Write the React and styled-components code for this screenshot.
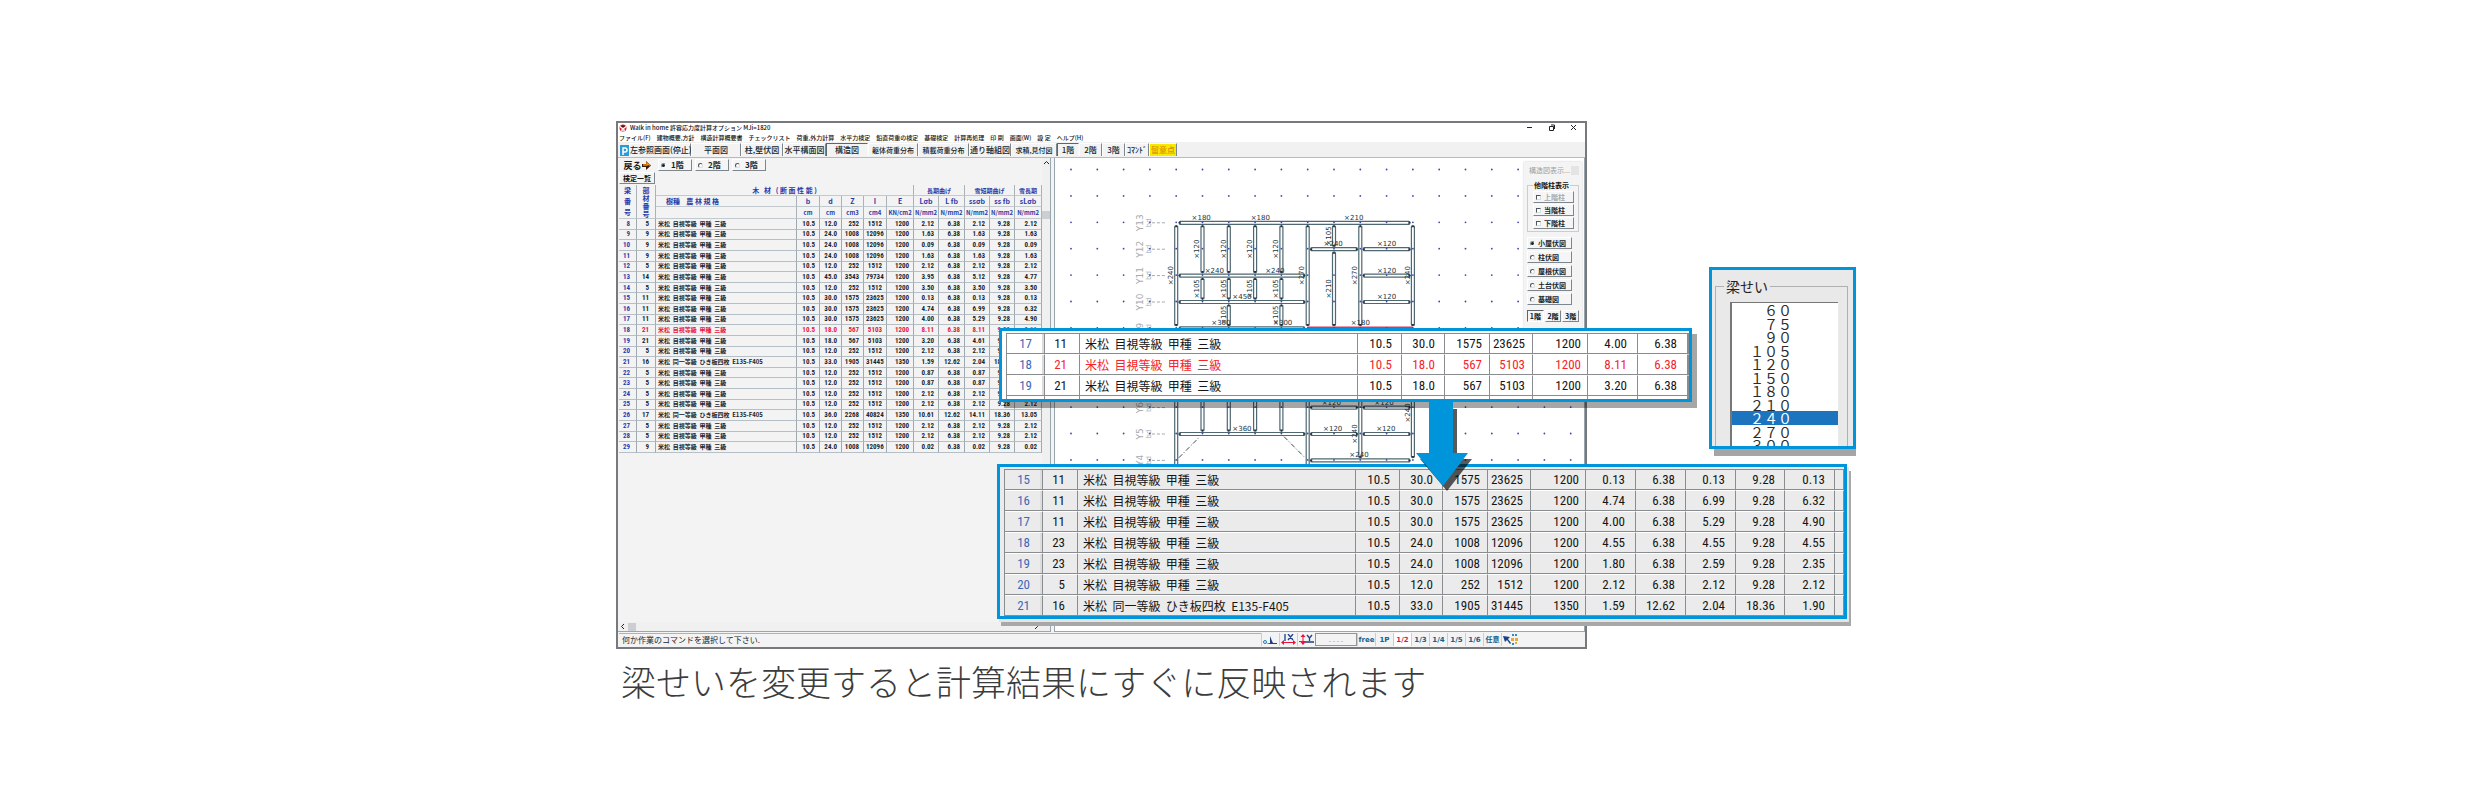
import React from 'react';
import styled, { createGlobalStyle, css } from 'styled-components';

const BLUE = '#0094da';
const JP = '"Noto Sans CJK JP", sans-serif';
const NARROW = '"Liberation Sans Narrow", "Roboto Condensed", "Noto Sans CJK JP", sans-serif';

const GlobalStyle = createGlobalStyle`
  * { box-sizing: border-box; }
  body { margin: 0; background: #fff; font-family: ${JP}; color: #111; }
  button, input, fieldset, legend { margin: 0; padding: 0; border: 0; font: inherit; color: inherit; background: none; }
`;

const Page = styled.main`
  padding: 121px 3px 40px 0;
`;

const Figure = styled.figure`
  position: relative;
  max-width: 1240px;
  margin: 0 auto;
  overflow: hidden;
`;

const Caption = styled.figcaption`
  margin-top: 5px;
  padding-left: 5px;
  font-size: 35px;
  font-weight: 300;
  line-height: 54px;
  color: #3c3c3c;
`;

/* application window */

const Window = styled.section`
  display: flex;
  flex-direction: column;
  max-width: 971px;
  border: 2px solid #77797c;
  background: #fff;
`;

const TitleBar = styled.header`
  display: flex;
  align-items: center;
  gap: 3px;
  height: 9px;
  padding-left: 1px;
  line-height: 9px;
  white-space: nowrap;
`;

const TitleText = styled.span`
  flex: 1;
  font-size: 6px;
  font-weight: 500;
`;

const WindowButtons = styled.div`
  display: flex;
  gap: 15px;
  padding-right: 8px;
  button { display: flex; }
`;

const MenuBar = styled.nav`
  display: flex;
  align-items: center;
  gap: 6px;
  height: 10px;
  padding-left: 1px;
  font-size: 6px;
  font-weight: 500;
  line-height: 9px;
  white-space: nowrap;
`;

const ToolBar = styled.div`
  display: flex;
  align-items: stretch;
  height: 16px;
  padding: 1px 2px;
  border-bottom: 1px solid #b4bcc2;
  background: #f1f1f1;
  svg { flex: none; }
`;

const ToolButton = styled.button`
  flex: none;
  width: ${(p) => p.$w}px;
  border-right: 1px solid ${(p) => (p.$pressed ? '#f8f8f8' : '#7d868c')};
  border-left: 1px solid ${(p) => (p.$pressed ? '#5d666c' : '#fdfdfd')};
  border-top: 1px solid ${(p) => (p.$pressed ? '#5d666c' : '#fdfdfd')};
  background: ${(p) => (p.$warn ? '#f7ea00' : '#f3f3f3')};
  color: ${(p) => (p.$warn ? '#e08a00' : '#12232b')};
  font-size: ${(p) => (p.$small ? 7 : 8)}px;
  font-weight: 500;
  line-height: 12px;
  white-space: nowrap;
`;

const Body = styled.div`
  display: grid;
  grid-template-columns: 433px 1fr;
  min-height: 474px;
  background: #f3f3f3;
`;

const LeftPane = styled.div`
  display: flex;
  flex-direction: column;
  border-right: 1px solid #9aa6ae;
  border-bottom: 1px solid #9aa6ae;
`;

const PaneRow = styled.div`
  display: flex;
  flex: 1;
`;

const PaneContent = styled.div`
  flex: 1;
  min-width: 0;
  padding: 1px 0 0 1px;
`;

const ViewRow = styled.div`
  display: flex;
  gap: 3px;
  height: 13px;
`;

const BackButton = styled.button`
  display: flex;
  align-items: center;
  justify-content: center;
  width: 36px;
  font-size: 9px;
  font-weight: 700;
  line-height: 12px;
  color: #1c1c1c;
`;

const ListButton = styled.button`
  display: block;
  width: 36px;
  height: 12px;
  margin-bottom: 1px;
  border: 1px solid;
  border-color: #fff #7d868c #7d868c #fff;
  font-size: 7px;
  font-weight: 700;
  line-height: 10px;
`;

const Choice = styled.label`
  display: flex;
  align-items: center;
  gap: ${(p) => p.$gap || 3}px;
  width: ${(p) => p.$w}px;
  height: 12px;
  padding-left: 2px;
  border: 1px solid;
  border-color: #fff #7d868c #7d868c #fff;
  background: #f5f5f5;
  color: ${(p) => (p.$off ? '#a5abaf' : '#17262e')};
  font-size: ${(p) => p.$size || 8}px;
  font-weight: 700;
  line-height: 10px;
  white-space: nowrap;
`;

const mark = css`
  appearance: none;
  flex: none;
  width: 5px;
  height: 5px;
  border: 1px solid;
  border-color: #4b565c #d8dcde #d8dcde #4b565c;
  background: #fff;
`;

const Radio = styled.input`
  ${mark}
  border-radius: 50%;
  &:checked { background: #17262e; border-color: #8b969c #fff #fff #8b969c; }
`;

const Check = styled.input`
  ${mark}
`;

const VScroll = styled.div`
  display: flex;
  flex-direction: column;
  gap: 46px;
  align-items: center;
  width: 8px;
  padding-top: 3px;
  background: #f0f0f0;
`;

const HScroll = styled.div`
  display: flex;
  align-items: center;
  gap: 3px;
  height: 9px;
  padding: 0 12px 0 3px;
  background: #f0f0f0;
  svg:last-child { margin-left: auto; }
`;

const Thumb = styled.div`
  width: 8px;
  height: 8px;
  background: #cbcfd2;
`;

const Sheet = styled.table`
  table-layout: fixed;
  width: 423px;
  height: 268px;
  border-collapse: separate;
  border-spacing: 0;
  font-family: ${NARROW};
  font-size: 7px;
  font-weight: 700;
  line-height: 8px;
  white-space: pre;
`;

const HeadCell = styled.th`
  height: ${(p) => p.$h || 11}px;
  padding: 0;
  overflow: hidden;
  border-right: 1px solid #aab3b8;
  border-bottom: 1px solid #c3cacf;
  color: #2a3aa8;
  font-weight: 700;
  font-family: ${JP};
  font-size: ${(p) => (p.$small ? 6 : 7)}px;
  line-height: ${(p) => p.$lead || 9}px;
  text-align: ${(p) => p.$align || 'center'};
  padding-left: ${(p) => (p.$align ? 10 : 0)}px;
`;

const SheetCell = styled.td`
  padding: 0 ${(p) => p.$pad}px 0 2px;
  border-right: 1px solid #9ea9b0;
  border-bottom: 1px solid #b6bfc5;
  color: ${(p) => (p.$hot ? '#e8123e' : p.$index ? '#2a3aa8' : '#17262e')};
  text-align: ${(p) => (p.$name ? 'left' : 'right')};
  ${(p) => p.$name && css`font-family: ${JP}; font-size: 6px;`}
`;

const RightPane = styled.div`
  position: relative;
  margin-left: 3px;
  border: 1px solid #9aa6ae;
  border-top: 0;
  background: #fff;
  overflow: hidden;
`;

const Plan = styled.svg`
  display: block;
  width: 100%;
  height: 472px;
`;

/* floating tool palette over the plan */

const Palette = styled.aside`
  position: absolute;
  top: 4px;
  right: 2px;
  display: flex;
  flex-direction: column;
  gap: 2px;
  width: 58px;
  height: 178px;
  padding: 0 3px;
  background: #f4f4f4;
  box-shadow: 0 0 2px #c8c8c8;
`;

const PaletteTitle = styled.div`
  display: flex;
  align-items: center;
  justify-content: space-between;
  height: 16px;
  padding-left: 2px;
  color: #9a9fa3;
  font-size: 7px;
  line-height: 10px;
`;

const PaletteClose = styled.button`
  width: 8px;
  height: 9px;
  background: #e4e4e4;
`;

const PaletteGroup = styled.fieldset`
  display: flex;
  flex-direction: column;
  gap: 1px;
  margin-bottom: 3px;
  padding: 1px 4px 2px 5px;
  border: 1px solid #c9cdd0;
  legend {
    padding: 0 1px;
    font-size: 7px;
    font-weight: 700;
    line-height: 10px;
  }
`;

const PaletteRadios = styled.div`
  display: flex;
  flex-direction: column;
  gap: 2px;
`;

const FloorTabs = styled.div`
  display: flex;
  gap: 1px;
  padding-top: 3px;
`;

const FloorTab = styled.button`
  flex: 1;
  height: 12px;
  border: 1px solid;
  border-color: ${(p) => (p.$on ? '#5d666c #fff #fff #5d666c' : '#fff #7d868c #7d868c #fff')};
  font-size: 7px;
  font-weight: 700;
  line-height: 10px;
  white-space: nowrap;
`;

/* status bar */

const StatusBar = styled.footer`
  display: flex;
  align-items: stretch;
  height: 15px;
  padding: 1px 66px 1px 1px;
  background: #f3f3f3;
`;

const StatusText = styled.div`
  flex: 1;
  padding-left: 3px;
  border-top: 1px solid #aab3b8;
  font-size: 8px;
  line-height: 12px;
  color: #17262e;
`;

const StatusButton = styled.button`
  display: flex;
  align-items: center;
  justify-content: center;
  width: 18px;
  border-left: 1px solid #c8ced2;
  color: ${(p) => (p.$on ? '#e8123e' : '#10618f')};
  background: ${(p) => (p.$on ? '#fff' : 'none')};
  font-family: "DejaVu Sans", ${JP};
  font-size: 7px;
  font-weight: 700;
  line-height: 12px;
`;

const ScaleInput = styled.input`
  width: 42px;
  border: 1px solid #8c979d;
  color: #8f979c;
  font-size: 7px;
  text-align: center;
`;

/* enlarged call-outs */

const CallOut = styled.div`
  position: absolute;
  left: ${(p) => p.$x}px;
  top: ${(p) => p.$y}px;
  width: ${(p) => p.$w}px;
  padding: 2px 0 0 4px;
  overflow: hidden;
  border: 3px solid ${BLUE};
  background: ${(p) => p.$bg};
  box-shadow: ${(p) => p.$shadow};
`;

const ZoomTable = styled.table`
  table-layout: fixed;
  width: 100%;
  border-collapse: separate;
  border-spacing: 0;
  border-left: 1px solid #8a8d90;
  font-family: ${NARROW};
  font-size: 13px;
  line-height: 18px;
  white-space: pre;
`;

const ZoomCell = styled.td`
  height: 21px;
  padding: 0 ${(p) => p.$pad}px 0 0;
  border-top: 1px solid ${(p) => (p.$first ? '#8a8d90' : '#fff')};
  border-right: 1px solid #8a8d90;
  border-bottom: 1px solid #8a8d90;
  color: ${(p) => (p.$index ? '#3d68b8' : p.$hot ? '#f5232b' : '#161616')};
  text-align: right;
  ${(p) => p.$name && css`
    padding-left: 5px;
    text-align: left;
    font-family: ${JP};
    font-size: 12px;
  `}
  ${(p) => p.$index && css`box-shadow: inset -2px 0 0 #dcdcdc;`}
`;

const ZoomRest = styled.td`
  height: 3px;
  padding: 0;
  border-right: 1px solid #8a8d90;
`;

const Arrow = styled.svg`
  position: absolute;
  left: 796px;
  top: 281px;
  width: 64px;
  height: 94px;
`;

const DepthPanel = styled.div`
  position: absolute;
  left: 1093px;
  top: 146px;
  width: 147px;
  height: 182px;
  padding: 8px 5px 0 3px;
  overflow: hidden;
  border: 3px solid ${BLUE};
  background: #e9e9e9;
`;

const DepthShadow = styled.div`
  position: absolute;
  left: 1098px;
  top: 153px;
  width: 142px;
  height: 182px;
  background: #a5a5a5;
`;

const DepthGroup = styled.fieldset`
  height: 190px;
  padding: 8px 9px 0 14px;
  border: 1px solid #b0b0b0;
  legend {
    margin-left: -6px;
    padding: 0 2px;
    font-size: 14px;
    line-height: 16px;
    color: #222;
  }
`;

const DepthList = styled.div`
  height: 180px;
  border-top: 1px solid #777;
  border-left: 2px solid #777;
  background: #fff;
`;

const DepthOption = styled.label`
  display: flex;
  align-items: center;
  justify-content: flex-end;
  height: 14px;
  padding-right: 46px;
  font-size: 14px;
  line-height: 14px;
  color: #2b2b2b;
  &:nth-child(even) { height: 13px; }
  &:has(input:checked) { background: #1b74bd; color: #fff; }
  input { appearance: none; width: 0; height: 0; }
`;

const menus = ['ファイル(F)', '建物概要,方針', '構造計算概要書', 'チェックリスト', '荷重,外力計算', '水平力検定', '鉛直荷重の検定', '基礎検定', '計算再処理', '印 刷', '画面(W)', '設 定', 'ヘルプ(H)'];

const tools = [
  { label: '左参照画面(停止)', w: 62 },
  { label: '平面図', w: 50 },
  { label: '柱,壁伏図', w: 42 },
  { label: '水平構面図', w: 43 },
  { label: '構造図', w: 42, pressed: true },
  { label: '躯体荷重分布', w: 50, small: true },
  { label: '積載荷重分布', w: 51, small: true },
  { label: '通り軸組図', w: 42 },
  { label: '求積,見付図', w: 46, small: true },
  { label: '1階', w: 22, pressed: true },
  { label: '2階', w: 23 },
  { label: '3階', w: 23 },
  { label: 'ｺﾏﾝﾄﾞ', w: 24 },
  { label: '留意点', w: 28, warn: true },
];

const N = '米松  目視等級  甲種  三級';
const L = '米松  同一等級  ひき板四枚  E135-F405';

const rows = [
  ['8', '5', N, '10.5', '12.0', '252', '1512', '1200', '2.12', '6.38', '2.12', '9.28', '2.12'],
  ['9', '9', N, '10.5', '24.0', '1008', '12096', '1200', '1.63', '6.38', '1.63', '9.28', '1.63'],
  ['10', '9', N, '10.5', '24.0', '1008', '12096', '1200', '0.09', '6.38', '0.09', '9.28', '0.09'],
  ['11', '9', N, '10.5', '24.0', '1008', '12096', '1200', '1.63', '6.38', '1.63', '9.28', '1.63'],
  ['12', '5', N, '10.5', '12.0', '252', '1512', '1200', '2.12', '6.38', '2.12', '9.28', '2.12'],
  ['13', '14', N, '10.5', '45.0', '3543', '79734', '1200', '3.95', '6.38', '5.12', '9.28', '4.77'],
  ['14', '5', N, '10.5', '12.0', '252', '1512', '1200', '3.50', '6.38', '3.50', '9.28', '3.50'],
  ['15', '11', N, '10.5', '30.0', '1575', '23625', '1200', '0.13', '6.38', '0.13', '9.28', '0.13'],
  ['16', '11', N, '10.5', '30.0', '1575', '23625', '1200', '4.74', '6.38', '6.99', '9.28', '6.32'],
  ['17', '11', N, '10.5', '30.0', '1575', '23625', '1200', '4.00', '6.38', '5.29', '9.28', '4.90'],
  ['18', '21', N, '10.5', '18.0', '567', '5103', '1200', '8.11', '6.38', '8.11', '9.28', '8.11'],
  ['19', '21', N, '10.5', '18.0', '567', '5103', '1200', '3.20', '6.38', '4.61', '9.28', '4.10'],
  ['20', '5', N, '10.5', '12.0', '252', '1512', '1200', '2.12', '6.38', '2.12', '9.28', '2.12'],
  ['21', '16', L, '10.5', '33.0', '1905', '31445', '1350', '1.59', '12.62', '2.04', '18.36', '1.90'],
  ['22', '5', N, '10.5', '12.0', '252', '1512', '1200', '0.87', '6.38', '0.87', '9.28', '0.87'],
  ['23', '5', N, '10.5', '12.0', '252', '1512', '1200', '0.87', '6.38', '0.87', '9.28', '0.87'],
  ['24', '5', N, '10.5', '12.0', '252', '1512', '1200', '2.12', '6.38', '2.12', '9.28', '2.12'],
  ['25', '5', N, '10.5', '12.0', '252', '1512', '1200', '2.12', '6.38', '2.12', '9.28', '2.12'],
  ['26', '17', L, '10.5', '36.0', '2268', '40824', '1350', '10.61', '12.62', '14.11', '18.36', '13.05'],
  ['27', '5', N, '10.5', '12.0', '252', '1512', '1200', '2.12', '6.38', '2.12', '9.28', '2.12'],
  ['28', '5', N, '10.5', '12.0', '252', '1512', '1200', '2.12', '6.38', '2.12', '9.28', '2.12'],
  ['29', '9', N, '10.5', '24.0', '1008', '12096', '1200', '0.02', '6.38', '0.02', '9.28', '0.02'],
];

const before = [
  ['17', '11', N, '10.5', '30.0', '1575', '23625', '1200', '4.00', '6.38'],
  ['18', '21', N, '10.5', '18.0', '567', '5103', '1200', '8.11', '6.38'],
  ['19', '21', N, '10.5', '18.0', '567', '5103', '1200', '3.20', '6.38'],
];

const after = [
  ['15', '11', N, '10.5', '30.0', '1575', '23625', '1200', '0.13', '6.38', '0.13', '9.28', '0.13'],
  ['16', '11', N, '10.5', '30.0', '1575', '23625', '1200', '4.74', '6.38', '6.99', '9.28', '6.32'],
  ['17', '11', N, '10.5', '30.0', '1575', '23625', '1200', '4.00', '6.38', '5.29', '9.28', '4.90'],
  ['18', '23', N, '10.5', '24.0', '1008', '12096', '1200', '4.55', '6.38', '4.55', '9.28', '4.55'],
  ['19', '23', N, '10.5', '24.0', '1008', '12096', '1200', '1.80', '6.38', '2.59', '9.28', '2.35'],
  ['20', '5', N, '10.5', '12.0', '252', '1512', '1200', '2.12', '6.38', '2.12', '9.28', '2.12'],
  ['21', '16', L, '10.5', '33.0', '1905', '31445', '1350', '1.59', '12.62', '2.04', '18.36', '1.90'],
];

const sheetCols = [18, 19, 141, 23, 22, 22, 23, 27, 25, 26, 25, 25, 27];
const zoomCols = [38, 35, 278, 44, 43, 45, 43, 55, 50, 50, 50, 49, 50];
const zoomPads = [12, 12, 0, 9, 9, 7, 7, 6, 10, 10, 10, 9, 9];
const symbols = ['b', 'd', 'Z', 'I', 'E', 'Lσb', 'L fb', 'ssσb', 'ss fb', 'sLσb'];
const units = ['cm', 'cm', 'cm3', 'cm4', 'KN/cm2', 'N/mm2', 'N/mm2', 'N/mm2', 'N/mm2', 'N/mm2'];
const depths = ['６０', '７５', '９０', '１０５', '１２０', '１５０', '１８０', '２１０', '２４０', '２７０', '３００'];

// plan grid: column k and row j to drawing units
const gx = (k) => 16 + 26.3 * k;
const gy = (j) => 12 + 26.4 * j;

// [row, from column, to column]
const beamsH = [
  [2, 4, 13], [3, 9, 11], [3, 11, 13], [4, 4, 9], [4, 11, 13], [5, 4, 9], [5, 11, 13], [6, 4, 9],
  [9, 9, 11], [9, 11, 13], [10, 4, 9], [10, 9, 11], [10, 11, 13], [11, 9, 13],
];
// [column, from row, to row]
const beamsV = [
  [4, 2, 6], [5, 2, 4], [6, 2, 4], [7, 2, 4], [8, 2, 4], [5, 4, 5], [6, 4, 5], [7, 4, 5], [8, 4, 5],
  [6, 5, 6], [8, 5, 6], [9, 2, 6], [10, 2, 3], [10, 3, 6], [11, 2, 6], [13, 2, 6],
  [4, 6, 12], [5, 7, 10], [6, 7, 10], [7, 7, 10], [8, 7, 10], [9, 6, 12], [11, 6, 11], [13, 6, 11],
];
const labelsH = [
  [4.95, 2, 180], [7.2, 2, 180], [10.75, 2, 210], [9.97, 3, 240], [12, 3, 120], [5.45, 4, 240], [7.75, 4, 240],
  [12, 4, 120], [6.5, 5, 450], [12, 5, 120], [5.7, 6, 300], [8.05, 6, 300], [11, 6, 180],
  [9.9, 9, 120], [11.9, 9, 120], [6.5, 10, 360], [9.95, 10, 120], [11.97, 10, 120], [10.95, 11, 240],
];
const labelsV = [
  [3.8, 4, 240], [4.8, 3, 120], [5.8, 3, 120], [6.8, 3, 120], [7.8, 3, 120], [4.8, 4.5, 105], [5.8, 4.5, 105],
  [6.8, 4.5, 105], [7.8, 4.5, 105], [5.8, 5.5, 105], [7.8, 5.5, 105], [8.8, 4, 270], [9.8, 2.5, 105],
  [9.8, 4.5, 210], [10.8, 4, 270], [12.8, 4, 240], [10.8, 10, 240], [12.8, 9.2, 240],
];
const axes = [[2, 'Y13'], [3, 'Y12'], [4, 'Y11'], [5, 'Y10'], [6, 'Y9'], [9, 'Y6'], [10, 'Y5'], [11, 'Y4']];

const FloorPlan = () => (
  <Plan viewBox="0 0 529 472" preserveAspectRatio="xMinYMin slice" fontFamily="DejaVu Sans" textAnchor="middle">
    {axes.map(([j, name]) => (
      <g key={name} fill="#a3abb0">
        <text transform={`translate(${gx(2.75)} ${gy(j)}) rotate(-90)`} fontSize="9">{name}</text>
        <text transform={`translate(${gx(3) + 1} ${gy(j)}) rotate(-90)`} fontSize="7">bd</text>
        <path d={`M${gx(3) + 2} ${gy(j)}H${gx(3.6)}`} stroke="#a3abb0" strokeWidth="1" strokeDasharray="3 2" />
      </g>
    ))}
    <g fill="#fff" stroke="#4f6872" strokeWidth="1.200">
      {beamsH.map(([j, a, b]) => (
        <rect key={`${j}-${a}`} x={gx(a) + 3} y={gy(j) - 1.5} width={gx(b) - gx(a) - 6} height="3" rx="1" />
      ))}
      {beamsV.map(([k, a, b]) => (
        <rect key={`${k}-${a}`} x={gx(k) - 1.5} y={gy(a) + 3} width="3" height={gy(b) - gy(a) - 6} rx="1" />
      ))}
    </g>
    <g fill="#22343d">
      {beamsH.map(([j, a, b]) => (
        <path key={`${j}-${a}`} d={`M${gx(a) + 2} ${gy(j)}l2.500-1.500v3zM${gx(b) - 2} ${gy(j)}l-2.500-1.500v3z`} />
      ))}
      {beamsV.map(([k, a, b]) => (
        <path key={`${k}-${a}`} d={`M${gx(k)} ${gy(a) + 2}l-1.500 2.500h3zM${gx(k)} ${gy(b) - 2}l-1.500-2.500h3z`} />
      ))}
    </g>
    <path d={`M${gx(9)} ${gy(6) - 1}H${gx(13)}`} stroke="#e8305a" strokeWidth="2" />
    <path
      d={`M${gx(4.1)} ${gy(10.9)}L${gx(4.9)} ${gy(10.1)}M${gx(8.1)} ${gy(10.1)}L${gx(8.9)} ${gy(10.9)}`}
      stroke="#3a4d56" strokeWidth="1" strokeDasharray="5 2 1 2"
    />
    <g fill="#3b49ae">
      {Array.from({ length: 18 * 20 }, (_, n) => (
        <circle key={n} cx={gx(n % 20)} cy={gy(Math.floor(n / 20)) - 0.5} r="0.9" />
      ))}
    </g>
    <g fill="#22343d" fontSize="7">
      {labelsH.map(([k, j, v]) => (
        <text key={`${k}-${j}`} x={gx(k)} y={gy(j) - 3}>×{v}</text>
      ))}
      {labelsV.map(([k, j, v]) => (
        <text key={`${k}-${j}`} transform={`translate(${gx(k) + 2} ${gy(j)}) rotate(-90)`}>×{v}</text>
      ))}
    </g>
    <path d="M92 465q3-5 6 0" fill="none" stroke="#e8123e" strokeWidth="1.500" />
  </Plan>
);

const Logo = () => (
  <svg width="8" height="8" viewBox="0 0 16 16">
    <circle cx="8" cy="8" r="7" fill="#d4232c" />
    <path d="M2 5l6 5 6-5M4 12h8" fill="none" stroke="#fff" strokeWidth="2.500" />
    <path d="M8 2l4 4H4z" fill="#4a1216" />
  </svg>
);

const MemberSheet = () => (
  <Sheet>
    <colgroup>{sheetCols.map((w, i) => <col key={i} style={{ width: w }} />)}</colgroup>
    <thead>
      <tr>
        <HeadCell rowSpan={3} $lead={11}>{'梁\n番\n号'}</HeadCell>
        <HeadCell rowSpan={3} $lead={8}>{'部\n材\n番\n号'}</HeadCell>
        <HeadCell colSpan={6}>{'木   材   ( 断 面 性 能 )'}</HeadCell>
        <HeadCell colSpan={2} $small>長期曲げ</HeadCell>
        <HeadCell colSpan={2} $small>雪短期曲げ</HeadCell>
        <HeadCell $small>雪長期</HeadCell>
      </tr>
      <tr>
        <HeadCell $align="left">{'樹種    農 林 規 格'}</HeadCell>
        {symbols.map((s) => <HeadCell key={s}>{s}</HeadCell>)}
      </tr>
      <tr>
        <HeadCell $h={12} />
        {units.map((u, i) => <HeadCell key={i} $h={12} $small>{u}</HeadCell>)}
      </tr>
    </thead>
    <tbody>
      {rows.map((row) => (
        <tr key={row[0]}>
          {row.map((v, i) => (
            <SheetCell key={i} $index={i === 0} $name={i === 2} $hot={row[0] === '18' && i > 0} $pad={i < 2 ? 6 : 4}>{v}</SheetCell>
          ))}
        </tr>
      ))}
    </tbody>
  </Sheet>
);

const Enlarged = ({ data, cols, hot }) => (
  <ZoomTable>
    <colgroup>
      {zoomCols.slice(0, cols).map((w, i) => <col key={i} style={{ width: w }} />)}
      <col />
    </colgroup>
    <tbody>
      {data.map((row, r) => (
        <tr key={row[0]}>
          {row.map((v, i) => (
            <ZoomCell key={i} $first={r === 0} $index={i === 0} $name={i === 2} $hot={row[0] === hot} $pad={zoomPads[i]}>{v}</ZoomCell>
          ))}
          <ZoomCell $first={r === 0} $pad={0} />
        </tr>
      ))}
      {hot && <tr>{before[0].map((_, i) => <ZoomRest key={i} />)}<ZoomRest /></tr>}
    </tbody>
  </ZoomTable>
);

const PlanPalette = () => (
  <Palette>
    <PaletteTitle>構造図表示...<PaletteClose aria-label="閉じる" /></PaletteTitle>
    <PaletteGroup>
      <legend>他階柱表示</legend>
      {['上階柱', '当階柱', '下階柱'].map((t, i) => (
        <Choice key={t} $off={i === 0} $size={7}><Check type="checkbox" disabled={i === 0} />{t}</Choice>
      ))}
    </PaletteGroup>
    <PaletteRadios>
      {['小屋伏図', '柱伏図', '屋根伏図', '土台伏図', '基礎図'].map((t, i) => (
        <Choice key={t} $w={45} $size={7}><Radio type="radio" name="plan" defaultChecked={i === 0} />{t}</Choice>
      ))}
    </PaletteRadios>
    <FloorTabs>
      {['1階', '2階', '3階'].map((t, i) => <FloorTab key={t} $on={i === 0}>{t}</FloorTab>)}
    </FloorTabs>
  </Palette>
);

const Status = () => (
  <StatusBar>
    <StatusText>何か作業のコマンドを選択して下さい.</StatusText>
    <StatusButton aria-label="基準">
      <svg width="15" height="10" viewBox="0 0 15 10">
        <path d="M3 9l4-1V1l2 5 1 2h4v1z" fill="#1d3f86" />
        <circle cx="2" cy="7" r="1.500" fill="none" stroke="#1680b8" />
      </svg>
    </StatusButton>
    <StatusButton aria-label="X方向">
      <svg width="15" height="11" viewBox="0 0 15 11">
        <path d="M4 0v7M7 0l5 6M12 0l-5 6" stroke="#1d3f86" strokeWidth="1.300" />
        <path d="M0 8.500l3-2.500v5zM15 8.500l-3-2.500v5zM3 8h9v1H3z" fill="#e8123e" />
      </svg>
    </StatusButton>
    <StatusButton aria-label="Y方向">
      <svg width="15" height="11" viewBox="0 0 15 11">
        <path d="M8 1l2.500 3L13 1M10.500 4v3M6 8h9" fill="none" stroke="#1d3f86" strokeWidth="1.300" />
        <path d="M4 0l2.500 3h-5zM4 11l2.500-3h-5zM3.500 3h1v5h-1zM0 7h6v1H0z" fill="#e8123e" />
      </svg>
    </StatusButton>
    <ScaleInput aria-label="縮尺" defaultValue="- - - -" />
    {['free', '1P', '1/2', '1/3', '1/4', '1/5', '1/6', '任意'].map((t) => (
      <StatusButton key={t} $on={t === '1/2'}>{t}</StatusButton>
    ))}
    <StatusButton aria-label="選択">
      <svg width="15" height="11" viewBox="0 0 15 11">
        <path d="M0 2l7 1-2 2 3 4-1 1-3-4-2 2z" fill="#1d3f86" />
        <path d="M9 0h2v2H9zM12 0h2v2h-2zM9 9h2v2H9z" fill="#2a8ec4" />
        <path d="M8 4h3v3H8zM12 4h3v3h-3zM12 8h2v2h-2z" fill="#e0ae3c" />
      </svg>
    </StatusButton>
  </StatusBar>
);

const App = () => (
  <Page>
    <GlobalStyle />
    <Figure>
      <Window>
        <TitleBar>
          <Logo />
          <TitleText>Walk in home 許容応力度計算オプション MJi=1820</TitleText>
          <WindowButtons>
            <button aria-label="最小化"><svg width="7" height="7"><path d="M1 3.500h5" stroke="#222" /></svg></button>
            <button aria-label="元に戻す"><svg width="7" height="7"><path d="M1.500 2.500h4v4h-4zM3 1h3.500v4" fill="none" stroke="#222" /></svg></button>
            <button aria-label="閉じる"><svg width="7" height="7"><path d="M1 1l5 5M6 1l-5 5" stroke="#222" /></svg></button>
          </WindowButtons>
        </TitleBar>
        <MenuBar>{menus.map((m) => <button key={m}>{m}</button>)}</MenuBar>
        <ToolBar>
          <svg width="9" height="13" viewBox="0 0 9 13">
            <path d="M0 2h9v11H0z" fill="#2a9bd6" />
            <path d="M3 12V5h2a2 2 0 010 4H3" fill="none" stroke="#fff" strokeWidth="1.500" />
          </svg>
          {tools.map((t) => (
            <ToolButton key={t.label} $w={t.w} $pressed={t.pressed} $small={t.small} $warn={t.warn}>{t.label}</ToolButton>
          ))}
        </ToolBar>
        <Body>
          <LeftPane>
            <PaneRow>
              <PaneContent>
                <ViewRow>
                  <BackButton>
                    戻る
                    <svg width="9" height="9" viewBox="0 0 9 9">
                      <path d="M0 3h4V0l5 4.500L4 9V6H0z" fill="#3c1c08" />
                      <path d="M1 4h4V2l3 2.500" fill="none" stroke="#f08a1c" strokeWidth="1.500" />
                    </svg>
                  </BackButton>
                  {['1階', '2階', '3階'].map((t, i) => (
                    <Choice key={t} $w={34} $gap={5}><Radio type="radio" name="floor" defaultChecked={i === 0} />{t}</Choice>
                  ))}
                </ViewRow>
                <ListButton>検定一覧</ListButton>
                <MemberSheet />
              </PaneContent>
              <VScroll>
                <svg width="5" height="4"><path d="M0 3l2.500-2.500L5 3" fill="none" stroke="#222" /></svg>
                <Thumb />
              </VScroll>
            </PaneRow>
            <HScroll>
              <svg width="4" height="5"><path d="M3 0L.500 2.500 3 5" fill="none" stroke="#222" /></svg>
              <Thumb />
              <svg width="4" height="5"><path d="M1 0l2.500 2.500L1 5" fill="none" stroke="#222" /></svg>
            </HScroll>
          </LeftPane>
          <RightPane>
            <FloorPlan />
            <PlanPalette />
          </RightPane>
        </Body>
        <Status />
      </Window>

      <CallOut $x={383} $y={207} $w={693} $bg="#fff" $shadow="5px 6px 0 rgba(0, 0, 0, 0.35)">
        <Enlarged data={before} cols={10} hot="18" />
      </CallOut>
      <CallOut $x={381} $y={343} $w={850} $bg="#ebebeb" $shadow="2px 3px 0 #e4e4e4, 4px 7px 0 #a8a8a8">
        <Enlarged data={after} cols={13} />
      </CallOut>
      <Arrow viewBox="0 0 64 94">
        <path d="M21 7h24v50h15L35 89 8 57h13z" fill="#000" opacity="0.65" />
        <path d="M17 0h24v51h15L31 84 4 51h13z" fill={BLUE} />
      </Arrow>
      <DepthShadow />
      <DepthPanel>
        <DepthGroup>
          <legend>梁せい</legend>
          <DepthList>
            {depths.map((d) => (
              <DepthOption key={d}>
                <input type="radio" name="depth" defaultChecked={d === '２４０'} />
                {d}
              </DepthOption>
            ))}
          </DepthList>
        </DepthGroup>
      </DepthPanel>

      <Caption>梁せいを変更すると計算結果にすぐに反映されます</Caption>
    </Figure>
  </Page>
);

export default App;
